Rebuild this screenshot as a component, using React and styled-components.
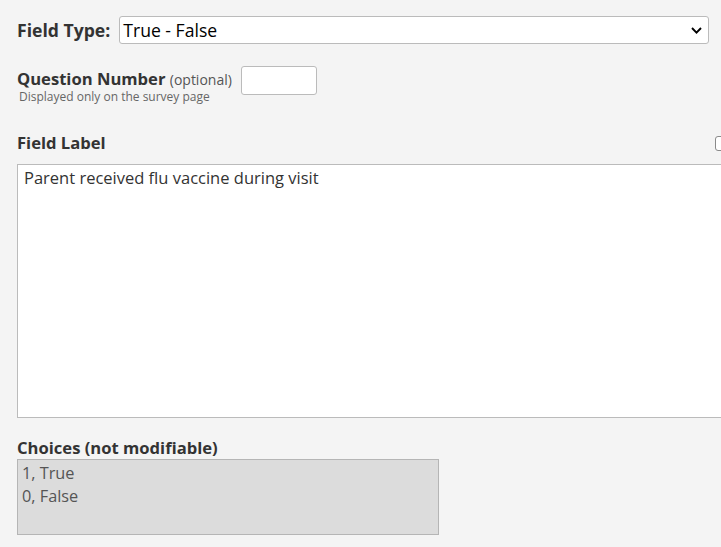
import React from 'react';
import styled, { createGlobalStyle } from 'styled-components';

const GlobalStyle = createGlobalStyle`
  html, body {
    margin: 0;
    padding: 0;
    background: #f4f4f4;
    overflow: hidden;
  }
  body {
    font-family: "Open Sans", "Liberation Sans", sans-serif;
    color: #333;
  }
`;

const Page = styled.div`
  width: 721px;
  height: 547px;
  overflow: hidden;
  box-sizing: border-box;
  padding: 16px 0 0 17px;
`;

const TypeRow = styled.div`
  display: flex;
  align-items: center;
  gap: 9px;
  padding-right: 12px;
`;

const NumberRow = styled.div`
  display: flex;
  align-items: flex-start;
  gap: 9px;
  margin-top: 22px;
`;

const NumberText = styled.div`
  padding-top: 3px;
`;

const BoldLabel = styled.label`
  display: block;
  font-weight: bold;
  font-size: ${p => p.size || 16.6}px;
  line-height: 20px;
  color: #333;
  white-space: nowrap;
`;

const Optional = styled.span`
  font-weight: normal;
  font-size: 14px;
  color: #555;
`;

const Hint = styled.div`
  font-size: 12px;
  color: #666;
  line-height: 14px;
  padding-left: 2px;
`;

const SelectBox = styled.div`
  flex: 1;
  height: 28px;
  box-sizing: border-box;
  border: 1px solid #bbb;
  border-radius: 3px;
  background: #fff;
  display: flex;
  align-items: center;
  justify-content: space-between;
  padding: 0 6px 0 3px;
  font-size: 17.6px;
  color: #000;
`;

const SmallInput = styled.div`
  width: 76px;
  height: 29px;
  box-sizing: border-box;
  border: 1px solid #bbb;
  border-radius: 3px;
  background: #fff;
`;

const LabelHeader = styled.div`
  display: flex;
  justify-content: space-between;
  align-items: center;
  margin: 29px 0 11px 0;
`;

const CheckStub = styled.span`
  width: 13px;
  height: 15px;
  box-sizing: border-box;
  border: 1px solid #8a8a8a;
  border-radius: 3px;
  background: #fff;
  margin-right: -7px;
`;

const TextArea = styled.div`
  height: 254px;
  box-sizing: border-box;
  border: 1px solid #bbb;
  border-right: none;
  background: #fff;
  padding: 1px 6px;
  font-size: 16.5px;
  color: #333;
  margin-bottom: 20px;
`;

const ChoicesLabel = styled(BoldLabel)`
  margin-bottom: 1px;
`;

const ChoicesBox = styled.div`
  width: 422px;
  height: 76px;
  box-sizing: border-box;
  border: 1px solid #b5b5b5;
  background: #dcdcdc;
  padding: 2px 4px;
  font-size: 16.3px;
  line-height: 22.7px;
  color: #555;
`;

const Chevron = () => (
  <svg width="11" height="7" viewBox="0 0 11 7">
    <path d="M1 1 L5.5 5.6 L10 1" fill="none" stroke="#000" strokeWidth="1.9" />
  </svg>
);

export default function App() {
  return (
    <Page>
      <GlobalStyle />
      <TypeRow>
        <BoldLabel size={17.6}>Field Type:</BoldLabel>
        <SelectBox>
          <span>True - False</span>
          <Chevron />
        </SelectBox>
      </TypeRow>
      <NumberRow>
        <NumberText>
          <BoldLabel>
            Question Number <Optional>(optional)</Optional>
          </BoldLabel>
          <Hint>Displayed only on the survey page</Hint>
        </NumberText>
        <SmallInput />
      </NumberRow>
      <LabelHeader>
        <BoldLabel>Field Label</BoldLabel>
        <CheckStub />
      </LabelHeader>
      <TextArea>Parent received flu vaccine during visit</TextArea>
      <ChoicesLabel>Choices (not modifiable)</ChoicesLabel>
      <ChoicesBox>
        1, True
        <br />
        0, False
      </ChoicesBox>
    </Page>
  );
}
